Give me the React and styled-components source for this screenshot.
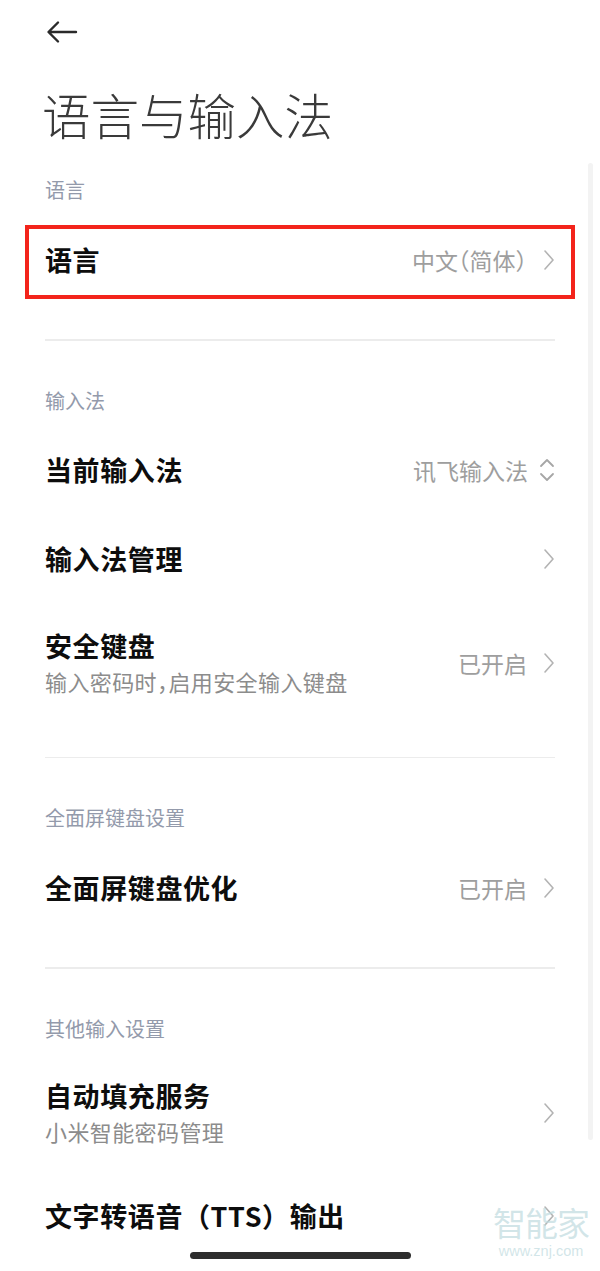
import React from "react";
import styled, { createGlobalStyle } from "styled-components";

const Global = createGlobalStyle`
  html, body {
    margin: 0;
    padding: 0;
    background: #ffffff;
  }
  body {
    font-family: "Noto Sans CJK SC", "Noto Sans", sans-serif;
  }
`;

const sections = [
  {
    label: "语言",
    rows: [{ title: "语言", value: "中文（简体）", marked: true }],
  },
  {
    label: "输入法",
    rows: [
      { title: "当前输入法", value: "讯飞输入法", icon: "updown" },
      { title: "输入法管理" },
      { title: "安全键盘", sub: "输入密码时，启用安全输入键盘", value: "已开启" },
    ],
  },
  {
    label: "全面屏键盘设置",
    rows: [{ title: "全面屏键盘优化", value: "已开启" }],
  },
  {
    label: "其他输入设置",
    rows: [
      { title: "自动填充服务", sub: "小米智能密码管理" },
      { title: "文字转语音（TTS）输出" },
    ],
  },
];

const Screen = styled.div`
  position: relative;
  width: 600px;
  height: 1271px;
  overflow: hidden;
  background: #fff;
`;

const TopBar = styled.div`
  height: 64px;
  display: flex;
  align-items: center;
  padding-left: 46px;
`;

const Title = styled.h1`
  margin: 20px 0 0;
  padding-left: 42px;
  height: 60px;
  line-height: 60px;
  font-size: 48.5px;
  font-weight: 300;
  color: #3a3a3a;
`;

const Label = styled.div`
  padding: ${(p) => (p.first ? "36px" : "50px")} 45px 15px;
  line-height: 20px;
  font-size: 20px;
  color: #939aab;
`;

const Row = styled.div`
  position: relative;
  display: flex;
  align-items: center;
  min-height: ${(p) => (p.tall ? "118px" : "89px")};
  padding: 0 45px;
  box-sizing: border-box;
`;

const Texts = styled.div`
  flex: 1;
  display: flex;
  flex-direction: column;
  gap: 6px;
`;

const RowTitle = styled.div`
  font-size: 27px;
  line-height: 30px;
  font-weight: 700;
  color: #0d0d0d;
  letter-spacing: 0.6px;
`;

const RowSub = styled.div`
  font-size: 22px;
  line-height: 28px;
  color: #8c8c8c;
  letter-spacing: 0.4px;
  font-feature-settings: "halt";
`;

const Value = styled.span`
  font-size: 23px;
  color: #9e9e9e;
  margin-right: ${(p) => (p.wide ? "11px" : "16px")};
  font-feature-settings: "halt";
`;

const Mark = styled.div`
  position: absolute;
  left: 25px;
  right: 25px;
  top: 10px;
  height: 74px;
  border: 4px solid #f3241b;
  box-sizing: border-box;
`;

const Divider = styled.div`
  margin: 35px 45px 0;
  height: 1.5px;
  background: #ececec;
`;

const ScrollThumb = styled.div`
  position: absolute;
  left: 588px;
  top: 163px;
  width: 5px;
  height: 977px;
  border-radius: 3px;
  background: #f3f3f3;
`;

const HomeBar = styled.div`
  position: absolute;
  left: 190px;
  top: 1252px;
  width: 221px;
  height: 7px;
  border-radius: 4px;
  background: #2e2e2e;
`;

const Watermark = styled.div`
  position: absolute;
  left: 489px;
  top: 1202px;
  width: 104px;
  display: flex;
  flex-direction: column;
  align-items: center;
  color: rgba(190, 218, 222, 0.7);
  pointer-events: none;
`;

const WmBig = styled.span`
  font-size: 33px;
  line-height: 40px;
  letter-spacing: -1px;
`;

const WmSmall = styled.span`
  font-family: "Liberation Sans", Arial, sans-serif;
  font-size: 14.5px;
  line-height: 18px;
`;

const Chevron = () => (
  <svg width="12" height="22" viewBox="0 0 12 22">
    <path d="M2 2 L10 11 L2 20" fill="none" stroke="#b3b3b3" strokeWidth="1.6" strokeLinecap="round" strokeLinejoin="round" />
  </svg>
);

const UpDown = () => (
  <svg width="16" height="26" viewBox="0 0 16 26">
    <path d="M2 9 L8 3 L14 9 M2 17 L8 23 L14 17" fill="none" stroke="#a6a6a6" strokeWidth="1.8" strokeLinecap="round" strokeLinejoin="round" />
  </svg>
);

const BackArrow = () => (
  <svg width="32" height="24" viewBox="0 0 32 24">
    <path d="M30 12 H3 M12 2.5 L2.5 12 L12 21.5" fill="none" stroke="#2a2a2a" strokeWidth="2.4" strokeLinecap="round" strokeLinejoin="round" />
  </svg>
);

const App = () => {
  return (
    <Screen>
      <Global />
      <TopBar>
        <BackArrow />
      </TopBar>
      <Title>语言与输入法</Title>

      {sections.map((s, i) => (
        <div key={s.label}>
          {i > 0 && <Divider />}
          <Label first={i === 0}>{s.label}</Label>
          {s.rows.map((r) => (
            <Row key={r.title} tall={!!r.sub}>
              <Texts>
                <RowTitle>{r.title}</RowTitle>
                {r.sub && <RowSub>{r.sub}</RowSub>}
              </Texts>
              {r.value && <Value wide={r.icon === "updown"}>{r.value}</Value>}
              {r.icon === "updown" ? <UpDown /> : <Chevron />}
              {r.marked && <Mark />}
            </Row>
          ))}
        </div>
      ))}

      <ScrollThumb />
      <Watermark>
        <WmBig>智能家</WmBig>
        <WmSmall>www.znj.com</WmSmall>
      </Watermark>
      <HomeBar />
    </Screen>
  );
};

export default App;
